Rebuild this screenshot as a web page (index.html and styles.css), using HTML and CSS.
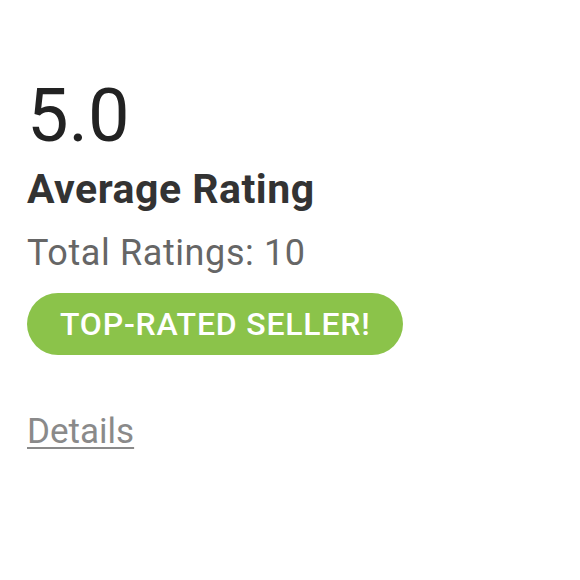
FILE: index.html
```html
<!DOCTYPE html>
<html>
<head>
<meta charset="utf-8">
<link rel="stylesheet" href="styles.css">
</head>
<body>
<div class="rating">
  <div class="score">5.0</div>
  <div class="title">Average Rating</div>
  <div class="total">Total Ratings: 10</div>
  <div class="badge">TOP-RATED SELLER!</div>
  <a class="details" href="#">Details</a>
</div>
</body>
</html>
```
FILE: styles.css
```css
html, body {
  margin: 0;
  padding: 0;
  background: #ffffff;
}
body {
  font-family: Roboto, "Noto Sans", sans-serif;
}
.rating {
  display: flex;
  flex-direction: column;
  align-items: flex-start;
  padding: 79px 0 0 27px;
}
.score {
  font-size: 74px;
  line-height: 74px;
  color: #222222;
}
.title {
  margin-top: 16px;
  font-size: 41px;
  line-height: 41px;
  font-weight: 700;
  letter-spacing: 0.5px;
  color: #333333;
}
.total {
  margin-top: 25px;
  font-size: 36px;
  line-height: 36px;
  letter-spacing: 0.6px;
  color: #666666;
}
.badge {
  margin-top: 22px;
  height: 62px;
  line-height: 62px;
  padding: 0 32px 0 33px;
  border-radius: 31px;
  background: #8bc34a;
  color: #ffffff;
  font-size: 32px;
  font-weight: 500;
  letter-spacing: 0.8px;
}
.details {
  margin-top: 59px;
  font-size: 35px;
  line-height: 35px;
  color: #8a8a8a;
  text-decoration: underline;
  text-underline-offset: 4px;
  text-decoration-thickness: 2px;
}
```
